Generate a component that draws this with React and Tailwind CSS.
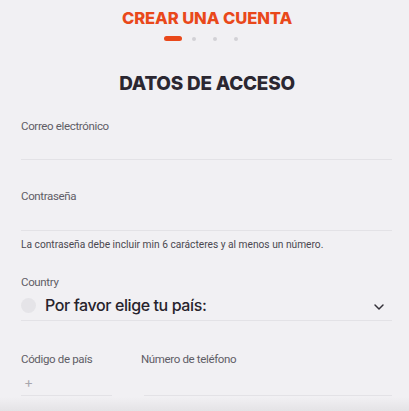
import { ChevronDown } from 'lucide-react';

const label = 'text-[11.5px] leading-[16px] text-[#5f5d66] tracking-[-0.35px] [font-family:Roboto,sans-serif]';
const line = 'border-b border-[#e3e2e6]';

export default function App() {
  return (
    <div className="relative min-h-[411px] bg-[#f1f0f3] overflow-hidden [font-family:Inter,sans-serif]">
      <div className="flex flex-col items-center pt-[8px] pl-[5px]">
        <h2 className="text-[16.6px] leading-[20px] font-extrabold text-[#e9481a] tracking-[-0.1px]">CREAR UNA CUENTA</h2>
        <div className="flex items-center mt-[8px] -ml-[12px]">
          <span className="w-[18px] h-[5px] rounded-full bg-[#e9481a]" />
          <span className="ml-[10px] w-[4px] h-[4px] rounded-full bg-[#d2d1d6]" />
          <span className="ml-[17px] w-[4px] h-[4px] rounded-full bg-[#d2d1d6]" />
          <span className="ml-[17px] w-[4px] h-[4px] rounded-full bg-[#d2d1d6]" />
        </div>
        <h1 className="mt-[31px] text-[18.9px] leading-[24px] font-extrabold text-[#2b2731] tracking-[-0.2px]">DATOS DE ACCESO</h1>
      </div>

      <div className="pl-[21px] pr-[17px] mt-[22px]">
        <div>
          <div className={label}>Correo electrónico</div>
          <div className={`h-[26px] ${line}`} />
        </div>
        <div className="pt-[28px]">
          <div className={label}>Contraseña</div>
          <div className={`h-[27px] ${line}`} />
        </div>
        <p className="mt-[7px] text-[10.2px] leading-[14px] text-[#4a4850] [font-family:Roboto,sans-serif]">
          La contraseña debe incluir min 6 carácteres y al menos un número.
        </p>

        <div className="mt-[22px]">
          <div className={label}>Country</div>
          <div className={`flex items-center h-[31px] ${line}`}>
            <span className="w-[15px] h-[15px] rounded-full bg-[#e5e4e8]" />
            <span className="ml-[9px] flex-1 text-[16px] font-medium text-[#27232c] tracking-[-0.4px]">Por favor elige tu país:</span>
            <ChevronDown className="w-[16px] h-[16px] mr-[5px] mt-[4px] text-[#333038]" strokeWidth={2.2} />
          </div>
        </div>

        <div className="mt-[30px] flex gap-[32px]">
          <div className="w-[91px]">
            <div className={label}>Código de país</div>
            <div className={`h-[29px] flex items-center text-[14px] text-[#a8a6ad] pl-[3px] ${line}`}>+</div>
          </div>
          <div className="flex-1">
            <div className={`${label} -ml-[3px]`}>Número de teléfono</div>
            <div className={`h-[29px] ${line}`} />
          </div>
        </div>
      </div>

      <div className="absolute inset-x-0 bottom-0 h-[14px] bg-gradient-to-b from-[#f1f0f3] to-[#e4e3e6]" />
    </div>
  );
}
